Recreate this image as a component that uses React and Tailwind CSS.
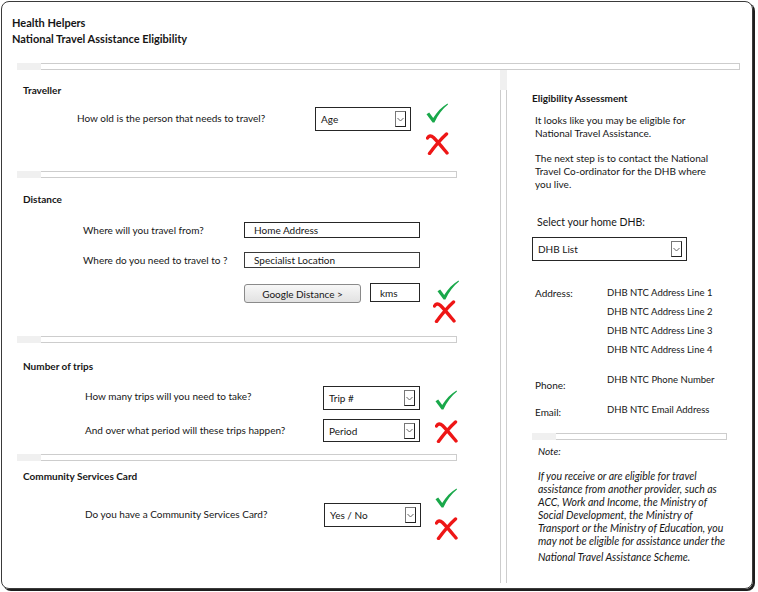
import React from "react";

function Check({ className = "" }) {
  return (
    <svg className={className} width="22" height="20" viewBox="0 0 22 20">
      <path d="M0.5 11.2 L3.2 9.6 L7.2 15 C11 9 15.5 4.2 21.5 0.6 L22 1.6 C16.5 6 12 12 8.4 19.6 L6.6 19.6 Z" fill="#19a84a" />
    </svg>
  );
}

function Cross({ className = "" }) {
  return (
    <svg className={className} width="23" height="23" viewBox="0 0 23 23">
      <path d="M1.5 6 C3 3.5 5 3.2 7.5 5.5 C12 10 16 15 21 21" stroke="#ee1616" strokeWidth="3.4" fill="none" strokeLinecap="round" />
      <path d="M20.5 2 C15 7 9 14 3.5 21.5" stroke="#ee1616" strokeWidth="3.4" fill="none" strokeLinecap="round" />
    </svg>
  );
}

function Select({ label, w, h = "h-[24px]" }) {
  return (
    <div className={`${w} ${h} border border-[#262626] bg-white flex items-center pl-[5px] pr-[4px] shrink-0`}>
      <span className="flex-1 leading-[14px]">{label}</span>
      <div className="w-[11px] h-[16px] border border-[#777] border-r-[#222] border-b-[#222] flex items-center justify-center bg-white">
        <svg width="7" height="5" viewBox="0 0 7 5">
          <path d="M0.5 1 L3.5 4 L6.5 1" stroke="#666" strokeWidth="1" fill="none" />
        </svg>
      </div>
    </div>
  );
}

function HBar({ w }) {
  return (
    <div className={`${w} h-[7px] bg-[#f0f0f0] flex shrink-0`}>
      <div className="w-[24px]" />
      <div className="flex-1 border-y border-r border-[#cdcdcd] bg-white" />
    </div>
  );
}

export default function App() {
  return (
    <div className="w-[758px] h-[592px] bg-white pt-[1px] pl-[1px] font-['Lato',sans-serif] text-[10px] text-[#161616]">
      <div className="w-[752px] h-[588px] border border-[#3a3a3a] rounded-[8px] shadow-[2px_2px_0_#1e1e1e] flex flex-col overflow-hidden">
        {/* Header */}
        <div className="pl-[10px] pt-[13px] font-bold text-[11px] leading-[16px]">
          <div>Health Helpers</div>
          <div>National Travel Assistance Eligibility</div>
        </div>
        <div className="mt-[16px] ml-[15px]">
          <HBar w="w-[723px]" />
        </div>

        {/* Body */}
        <div className="flex flex-1">
          {/* Left column */}
          <div className="ml-[15px] w-[483px] flex flex-col">
            {/* Traveller */}
            <div className="h-[101px]">
              <div className="mt-[13px] pl-[6px] leading-[14px] font-bold">Traveller</div>
              <div className="mt-[6px] flex items-start pl-[60px]">
                <span className="w-[238px] mt-[8px] leading-[14px]">How old is the person that needs to travel?</span>
                <div className="mt-[4px]">
                  <Select label="Age" w="w-[96px]" />
                </div>
                <div className="ml-[15px] flex flex-col">
                  <Check />
                  <Cross className="mt-[9px]" />
                </div>
              </div>
            </div>
            <HBar w="w-[440px]" />

            {/* Distance */}
            <div className="h-[158px]">
              <div className="mt-[14px] pl-[6px] leading-[14px] font-bold">Distance</div>
              <div className="mt-[16px] flex items-center pl-[66px] h-[16px]">
                <span className="w-[161px] leading-[14px]">Where will you travel from?</span>
                <div className="w-[176px] h-[16px] border border-[#262626] flex items-center pl-[9px] leading-[14px]">Home Address</div>
              </div>
              <div className="mt-[14px] flex items-center pl-[66px] h-[16px]">
                <span className="w-[161px] leading-[14px]">Where do you need to travel to ?</span>
                <div className="w-[176px] h-[16px] border border-[#3a3a3a] flex items-center pl-[9px] leading-[14px]">Specialist Location</div>
              </div>
              <div className="mt-[12px] flex items-start pl-[227px]">
                <div className="mt-[4px] w-[117px] h-[19px] border border-[#8a8a8a] rounded-[3px] bg-gradient-to-b from-[#f7f7f7] to-[#e2e2e2] flex items-center justify-center leading-[14px]">Google Distance &gt;</div>
                <div className="mt-[3px] ml-[9px] w-[50px] h-[19px] border border-[#262626] flex items-center pl-[9px] leading-[14px]">kms</div>
                <div className="ml-[13px] flex flex-col">
                  <Check className="ml-[4px]" />
                  <Cross />
                </div>
              </div>
            </div>
            <HBar w="w-[440px]" />

            {/* Number of trips */}
            <div className="h-[111px]">
              <div className="mt-[16px] pl-[6px] leading-[14px] font-bold">Number of trips</div>
              <div className="mt-[13px] flex items-start pl-[68px]">
                <span className="w-[238px] mt-[3px] leading-[14px]">How many trips will you need to take?</span>
                <Select label="Trip #" w="w-[97px]" />
                <div className="ml-[15px] mt-[4px]">
                  <Check />
                </div>
              </div>
              <div className="mt-[9px] flex items-start pl-[68px]">
                <span className="w-[238px] mt-[4px] leading-[14px]">And over what period will these trips happen?</span>
                <Select label="Period" w="w-[97px]" h="h-[23px]" />
                <div className="ml-[15px] mt-[1px]">
                  <Cross />
                </div>
              </div>
            </div>
            <HBar w="w-[440px]" />

            {/* Community Services Card */}
            <div>
              <div className="mt-[8px] pl-[6px] leading-[14px] font-bold">Community Services Card</div>
              <div className="mt-[5px] flex items-start pl-[68px]">
                <span className="w-[239px] mt-[19px] leading-[14px]">Do you have a Community Services Card?</span>
                <div className="mt-[15px]">
                  <Select label="Yes / No" w="w-[97px]" />
                </div>
                <div className="ml-[14px] flex flex-col">
                  <Check />
                  <Cross className="mt-[9px]" />
                </div>
              </div>
            </div>
          </div>

          {/* Vertical bar */}
          <div className="w-[7px] h-[513px] bg-[#f0f0f0] flex flex-col shrink-0">
            <div className="h-[20px]" />
            <div className="flex-1 border-x border-[#cdcdcd] bg-white" />
          </div>

          {/* Right column */}
          <div className="pl-[25px] flex flex-col">
            <div className="mt-[21px] leading-[14px] font-bold">Eligibility Assessment</div>
            <div className="mt-[9px] pl-[3px] leading-[13px]">
              <div>It looks like you may be eligible for</div>
              <div>National Travel Assistance.</div>
            </div>
            <div className="mt-[12px] pl-[3px] leading-[13px]">
              <div>The next step is to contact the National</div>
              <div>Travel Co-ordinator for the DHB where</div>
              <div>you live.</div>
            </div>
            <div className="mt-[24px] pl-[5px] leading-[14px] text-[10.5px]">Select your home DHB:</div>
            <div className="mt-[8px]">
              <Select label="DHB List" w="w-[155px]" />
            </div>
            <div className="mt-[25px] pl-[3px] flex leading-[14px]">
              <span className="w-[72px]">Address:</span>
              <div className="flex flex-col gap-[5px] text-[9.5px]">
                <span>DHB NTC Address Line 1</span>
                <span>DHB NTC Address Line 2</span>
                <span>DHB NTC Address Line 3</span>
                <span>DHB NTC Address Line 4</span>
              </div>
            </div>
            <div className="mt-[16px] pl-[3px] flex leading-[14px] h-[30px]">
              <span className="w-[72px] mt-[5px]">Phone:</span>
              <span className="text-[9.5px]">DHB NTC Phone Number</span>
            </div>
            <div className="pl-[3px] flex leading-[14px]">
              <span className="w-[72px] mt-[2px]">Email:</span>
              <span className="text-[9.5px]">DHB NTC Email Address</span>
            </div>
            <div className="mt-[14px]">
              <HBar w="w-[195px]" />
            </div>
            <div className="mt-[4px] pl-[6px] leading-[14px] italic">Note:</div>
            <div className="mt-[12px] pl-[6px] leading-[13px] italic text-[10.5px]">
              <div>If you receive or are eligible for travel</div>
              <div>assistance from another provider, such as</div>
              <div>ACC, Work and Income, the Ministry of</div>
              <div>Social Development, the Ministry of</div>
              <div>Transport or the Ministry of Education, you</div>
              <div>may not be eligible for assistance under the</div>
              <div className="mt-[3px]">National Travel Assistance Scheme.</div>
            </div>
          </div>
        </div>
      </div>
    </div>
  );
}
